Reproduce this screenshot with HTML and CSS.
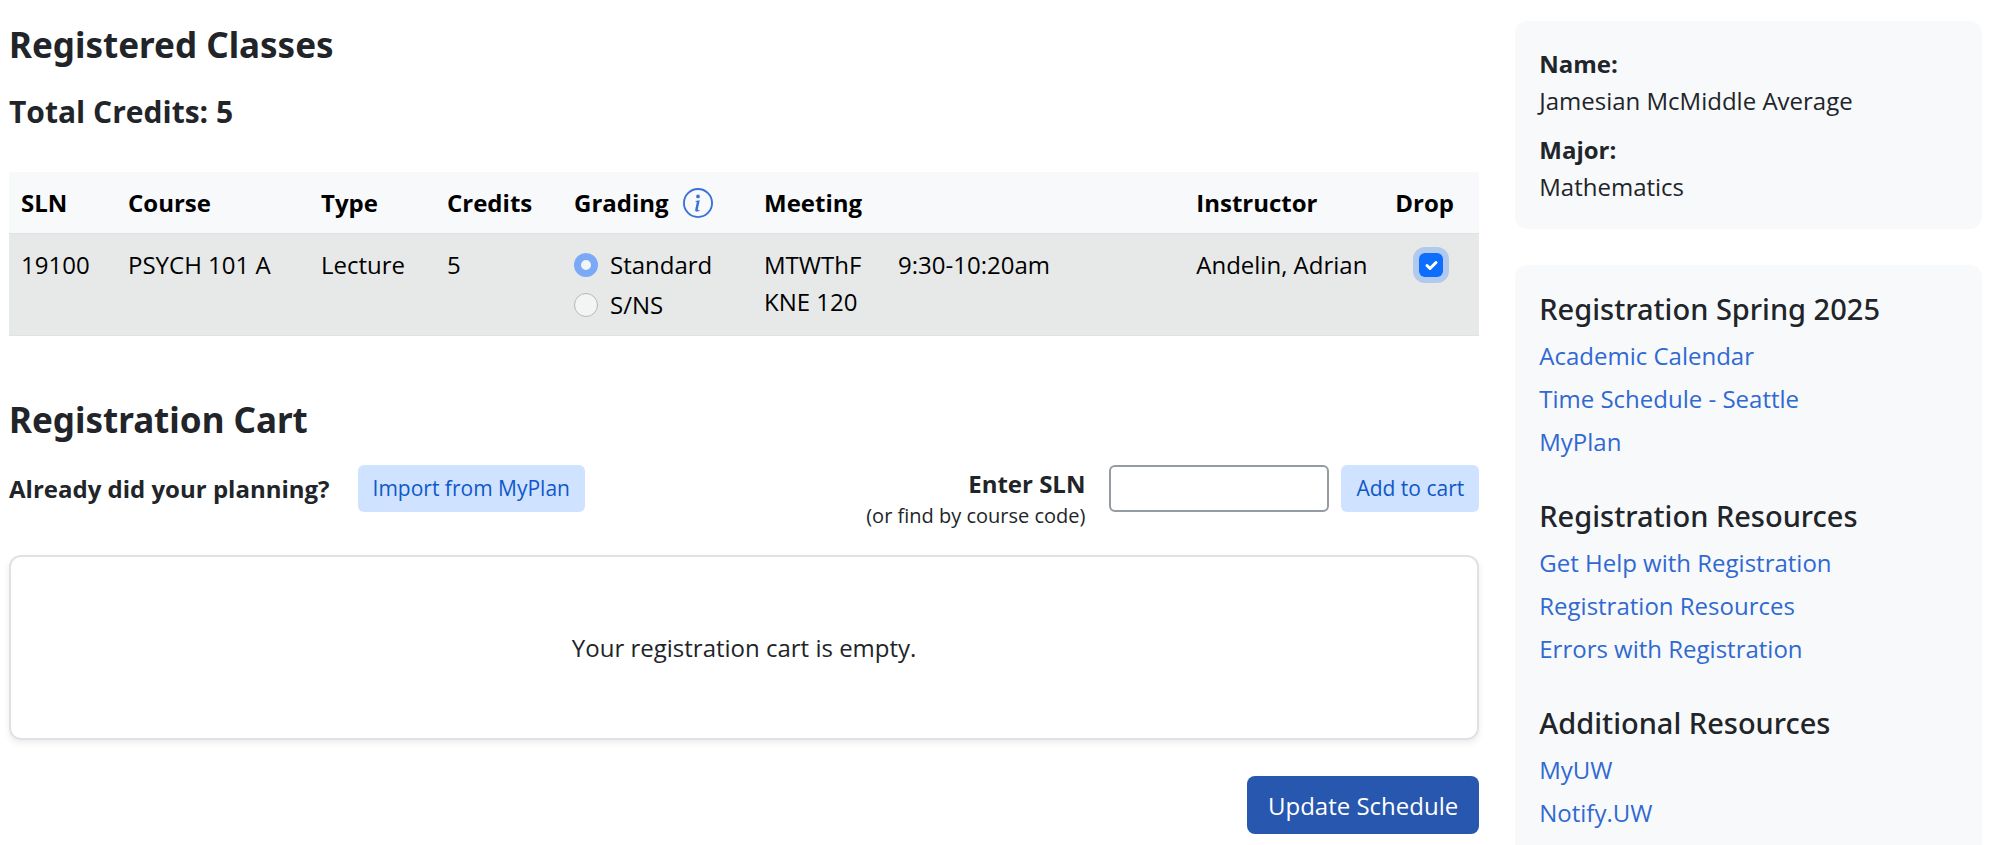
FILE: index.html
```html
<!doctype html>
<html lang="en">

<head>
  <meta charset="utf-8">
  <meta name="viewport" content="width=device-width, initial-scale=1">
  <link rel="stylesheet" href="styles.css">
  <title>Registration</title>
</head>

<body>
  <div class="page">
    <main class="content">
      <section class="registered">
        <h1 class="title">Registered Classes</h1>
        <p class="total">Total Credits: 5</p>
        <table class="classes">
          <colgroup>
            <col class="col-sln">
            <col class="col-course">
            <col class="col-type">
            <col class="col-credits">
            <col class="col-grading">
            <col class="col-days">
            <col class="col-time">
            <col class="col-instructor">
            <col class="col-drop">
          </colgroup>
          <thead>
            <tr>
              <th scope="col">SLN</th>
              <th scope="col">Course</th>
              <th scope="col">Type</th>
              <th scope="col">Credits</th>
              <th scope="col">
                <div class="grading-head">
                  Grading
                  <button class="info" type="button" aria-label="About grading">
                    <svg viewBox="0 0 16 16" fill="currentColor">
                      <path d="M8 15A7 7 0 1 1 8 1a7 7 0 0 1 0 14m0 1A8 8 0 1 0 8 0a8 8 0 0 0 0 16" />
                      <path d="m8.930 6.588-2.290.287-.082.380.450.083c.294.070.352.176.288.469l-.738 3.468c-.194.897.105 1.319.808 1.319.545 0 1.178-.252 1.465-.598l.088-.416c-.200.176-.492.246-.686.246-.275 0-.375-.193-.304-.533zM9 4.500a1 1 0 1 1-2 0 1 1 0 0 1 2 0" />
                    </svg>
                  </button>
                </div>
              </th>
              <th scope="col" colspan="2">Meeting</th>
              <th scope="col">Instructor</th>
              <th scope="col">Drop</th>
            </tr>
          </thead>
          <tbody>
            <tr>
              <td>19100</td>
              <td>PSYCH 101 A</td>
              <td>Lecture</td>
              <td>5</td>
              <td>
                <div class="grading">
                  <label class="choice"><input class="radio" type="radio" name="grading" checked disabled> Standard</label>
                  <label class="choice"><input class="radio" type="radio" name="grading" disabled> S/NS</label>
                </div>
              </td>
              <td>MTWThF<br>KNE 120</td>
              <td>9:30-10:20am</td>
              <td>Andelin, Adrian</td>
              <td class="drop">
                <label class="drop-label">
                  <input class="drop-check" type="checkbox" aria-label="Drop PSYCH 101 A" checked>
                  <svg class="tick" viewBox="0 0 24 24">
                    <path fill="none" stroke="#fff" stroke-linecap="round" stroke-linejoin="round" stroke-width="3" d="m8 12.500 3 3 6-6" />
                  </svg>
                </label>
              </td>
            </tr>
          </tbody>
        </table>
      </section>

      <section class="cart">
        <h1 class="title">Registration Cart</h1>
        <div class="cart-bar">
          <div class="planning">
            <span class="strong">Already did your planning?</span>
            <button class="btn btn-light" type="button">Import from MyPlan</button>
          </div>
          <form class="sln-form">
            <label class="sln-label" for="sln">
              <span class="strong">Enter SLN</span>
              <small class="hint">(or find by course code)</small>
            </label>
            <input class="sln-input" id="sln" type="text">
            <button class="btn btn-light" type="button">Add to cart</button>
          </form>
        </div>
        <div class="cart-empty">Your registration cart is empty.</div>
        <div class="actions">
          <button class="btn btn-primary" type="button">Update Schedule</button>
        </div>
      </section>
    </main>

    <aside class="sidebar">
      <dl class="card student">
        <dt>Name:</dt>
        <dd>Jamesian McMiddle Average</dd>
        <dt>Major:</dt>
        <dd>Mathematics</dd>
      </dl>
      <nav class="card links">
        <h2 class="subtitle">Registration Spring 2025</h2>
        <ul class="link-list">
          <li><a href="#">Academic Calendar</a></li>
          <li><a href="#">Time Schedule - Seattle</a></li>
          <li><a href="#">MyPlan</a></li>
        </ul>
        <h2 class="subtitle">Registration Resources</h2>
        <ul class="link-list">
          <li><a href="#">Get Help with Registration</a></li>
          <li><a href="#">Registration Resources</a></li>
          <li><a href="#">Errors with Registration</a></li>
        </ul>
        <h2 class="subtitle">Additional Resources</h2>
        <ul class="link-list">
          <li><a href="#">MyUW</a></li>
          <li><a href="#">Notify.UW</a></li>
        </ul>
      </nav>
    </aside>
  </div>
</body>

</html>
```
FILE: styles.css
```css
* {
  box-sizing: border-box;
}

body {
  margin: 0;
  font-family: "Open Sans", "Noto Sans", sans-serif;
  font-size: 24px;
  line-height: 37px;
  color: #212529;
  background-color: #fff;
}

button,
input {
  font: inherit;
}

h1,
h2,
p,
dl,
dd,
ul {
  margin: 0;
  padding: 0;
}

.page {
  display: grid;
  grid-template-columns: 63fr 20fr;
  gap: 36px;
  padding: 21px 18px 0 9px;
}

.title {
  font-family: "Noto Sans", sans-serif;
  font-size: 35px;
  line-height: 48px;
  font-weight: 700;
}

.total {
  margin-top: 24px;
  font-size: 30px;
  font-weight: 700;
}

.strong {
  font-weight: 700;
}

/* class table */

.classes {
  width: 100%;
  margin-top: 42px;
  border-collapse: collapse;
  table-layout: fixed;
  color: #000;
}

.classes th,
.classes td {
  padding: 12px;
  border-bottom: 1px solid #dee2e6;
  text-align: left;
  vertical-align: top;
  white-space: nowrap;
}

.classes th {
  background-color: #f8f9fb;
}

.classes td {
  height: 102px;
  background-color: #e7e9e8;
}

.classes .drop {
  text-align: center;
}

.col-sln {
  width: 107px;
}

.col-course {
  width: 193px;
}

.col-type {
  width: 126px;
}

.col-credits {
  width: 127px;
}

.col-grading {
  width: 190px;
}

.col-days {
  width: 134px;
}

.col-instructor {
  width: 199px;
}

.col-drop {
  width: 96px;
}

.grading-head {
  display: flex;
  align-items: center;
  gap: 14px;
}

.info {
  display: flex;
  padding: 0;
  border: none;
  background: none;
  color: #3771d9;
}

.info svg {
  width: 30px;
  height: 30px;
}

.grading {
  display: flex;
  flex-direction: column;
  gap: 3px;
}

.choice {
  display: flex;
  align-items: center;
  gap: 12px;
}

.radio {
  appearance: none;
  width: 24px;
  height: 24px;
  margin: 0;
  border: 1px solid #b4b7bb;
  border-radius: 50%;
  background-color: #f3f4f4;
}

.radio:checked {
  border: 7px solid #7aa9f7;
}

.drop-label {
  display: inline-grid;
  place-items: center;
  height: 37px;
}

.drop-check,
.tick {
  grid-area: 1 / 1;
  width: 24px;
  height: 24px;
}

.drop-check {
  appearance: none;
  margin: 0;
  border-radius: 6px;
  background-color: #0d6efd;
  box-shadow: 0 0 0 6px #b1c9ee;
}

.tick {
  z-index: 1;
}

/* cart */

.cart {
  margin-top: 60px;
}

.cart-bar {
  display: flex;
  justify-content: space-between;
  margin-top: 21px;
}

.planning,
.sln-form {
  display: flex;
  align-items: flex-start;
}

.planning {
  align-items: center;
  height: 47px;
  gap: 28px;
}

.sln-form {
  gap: 12px;
}

.sln-label {
  display: flex;
  flex-direction: column;
  margin-right: 12px;
  text-align: right;
}

.hint {
  font-size: 20px;
  line-height: 28px;
}

.sln-input {
  width: 220px;
  height: 47px;
  padding: 6px 12px;
  border: 2px solid #949ba3;
  border-radius: 6px;
}

.btn {
  border: none;
  border-radius: 6px;
  white-space: nowrap;
}

.btn-light {
  height: 47px;
  padding: 0 15px;
  font-size: 21px;
  color: #0f58ca;
  background-color: #cfe2ff;
}

.btn-primary {
  height: 58px;
  padding: 0 21px;
  border-radius: 8px;
  color: #fff;
  background-color: #2757ae;
}

.cart-empty {
  margin-top: 25px;
  padding: 72px 24px;
  border: 2px solid #dee2e6;
  border-radius: 12px;
  text-align: center;
  box-shadow: 0 3px 6px rgba(0, 0, 0, 0.08);
}

.actions {
  display: flex;
  justify-content: flex-end;
  margin-top: 36px;
}

/* sidebar */

.sidebar {
  display: flex;
  flex-direction: column;
  gap: 36px;
}

.card {
  padding: 24px;
  border-radius: 12px;
  background-color: #f8f9fb;
}

.student dt {
  font-weight: 700;
}

.student dd + dt {
  margin-top: 12px;
}

.subtitle {
  margin-bottom: 8px;
  font-family: "Noto Sans", sans-serif;
  font-size: 29px;
  line-height: 40px;
  font-weight: 500;
}

.link-list {
  display: flex;
  flex-direction: column;
  gap: 6px;
  margin-bottom: 36px;
  list-style: none;
}

.link-list a {
  color: #3069d1;
  text-decoration: none;
}
```
